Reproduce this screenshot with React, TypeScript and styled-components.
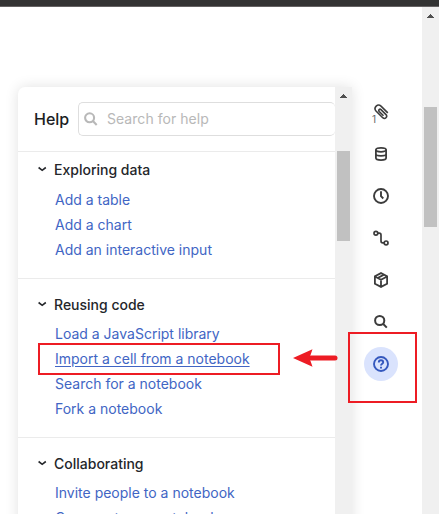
import React from "react";
import styled, { createGlobalStyle, css } from "styled-components";

const GlobalStyle = createGlobalStyle`
  * { box-sizing: border-box; }
  html, body { margin: 0; padding: 0; overflow: hidden; background: #fff; }
  body { font-family: Inter, "Liberation Sans", sans-serif; }
`;

const Window = styled.div`
  position: relative;
  width: 439px;
  height: 514px;
  display: flex;
  flex-direction: column;
  overflow: hidden;
  background: #fff;
`;

const TopBar = styled.div`
  flex: none;
  height: 7px;
  background: #333;
  border-bottom: 1px solid #656263;
`;

const Main = styled.div`
  flex: 1;
  min-height: 0;
  display: flex;
`;

const PanelArea = styled.div`
  flex: none;
  width: 352px;
  padding: 80px 0 0 18px;
`;

const Panel = styled.section`
  display: flex;
  height: 450px;
  border-radius: 7px 0 0 0;
  background: #fff;
  box-shadow: 0 0 14px rgba(0, 0, 0, 0.12);
`;

const PanelContent = styled.div`
  width: 317px;
  overflow: hidden;
`;

const Header = styled.header`
  display: flex;
  align-items: center;
  height: 65px;
  padding-left: 16px;
  border-bottom: 1px solid #ebebeb;
`;

const Title = styled.h1`
  flex: none;
  width: 44px;
  margin: 0;
  font-size: 16px;
  line-height: 24px;
  font-weight: 550;
  color: #1b1e23;
`;

const SearchField = styled.div`
  flex: 1;
  display: flex;
  align-items: center;
  gap: 9px;
  height: 34px;
  padding: 0 0 1px 5px;
  border: 1px solid #dedede;
  border-right: 0;
  border-radius: 5px;
  font-size: 14px;
  letter-spacing: 0.04px;
  color: #b8b8b8;
`;

const Section = styled.section<{ $first?: boolean }>`
  padding: ${(p) => (p.$first ? 5 : 13)}px 0 16px 19px;
  border-bottom: 1px solid #ebebeb;
`;

const SectionTitle = styled.h2<{ $first?: boolean }>`
  display: flex;
  align-items: center;
  gap: 7px;
  height: 24px;
  margin: 0 0 ${(p) => (p.$first ? 6 : 5)}px;
  font-size: 14px;
  font-weight: 550;
  color: #24262a;
`;

const HelpLink = styled.a<{ $active?: boolean }>`
  display: block;
  height: 25px;
  padding-left: 18px;
  font-size: 14px;
  line-height: 25px;
  color: #4165c4;
  text-decoration: ${(p) => (p.$active ? "underline" : "none")};
  text-underline-offset: 2px;
`;

const ScrollTrack = styled.div`
  flex: none;
  width: 17px;
  display: flex;
  flex-direction: column;
  align-items: center;
  background: #f0f0f0;
`;

const ScrollArrow = styled.svg`
  flex: none;
  width: 7px;
  height: 4px;
  margin-top: 7px;
  fill: #505050;
`;

const ScrollThumb = styled.div<{ $offset: number; $length: number }>`
  width: 13px;
  height: ${(p) => p.$length}px;
  margin-top: ${(p) => p.$offset}px;
  background: #c1c1c1;
`;

const Rail = styled.nav`
  flex: 1;
  display: flex;
  flex-direction: column;
  align-items: center;
  padding: 84px 12px 0 0;
`;

const RailItem = styled.div<{ $active?: boolean }>`
  position: relative;
  flex: none;
  display: flex;
  align-items: center;
  justify-content: center;
  width: 34px;
  height: 42px;
  color: #3c3c3c;
  ${(p) =>
    p.$active &&
    css`
      height: 34px;
      margin-top: 4px;
      border-radius: 50%;
      background: #dae3fd;
      color: #3558be;
    `}
`;

const Count = styled.span`
  position: absolute;
  left: 8px;
  top: 22px;
  font-size: 10px;
  line-height: 12px;
  color: #666;
`;

const Highlight = styled.div<{ $x: number; $y: number; $w: number; $h: number }>`
  position: absolute;
  left: ${(p) => p.$x}px;
  top: ${(p) => p.$y}px;
  width: ${(p) => p.$w}px;
  height: ${(p) => p.$h}px;
  border: 2px solid #ed1c24;
`;

const Pointer = styled.svg`
  position: absolute;
  left: 293px;
  top: 348px;
`;

const Icon = ({ children, width = 1.9 }: { children: React.ReactNode; width?: number }) => (
  <svg width="16" height="16" viewBox="0 0 16 16" fill="none" stroke="currentColor" strokeWidth={width}>
    {children}
  </svg>
);

const Chevron = () => (
  <svg width="10" height="8" viewBox="0 0 10 8" fill="none" stroke="currentColor" strokeWidth="1.6">
    <path d="M1.6 2.5 5.2 5.3 8.8 2.5" />
  </svg>
);

const sections = [
  { title: "Exploring data", links: ["Add a table", "Add a chart", "Add an interactive input"] },
  {
    title: "Reusing code",
    links: ["Load a JavaScript library", "Import a cell from a notebook", "Search for a notebook", "Fork a notebook"],
  },
  { title: "Collaborating", links: ["Invite people to a notebook", "Comment on a notebook"] },
];

const activeLink = "Import a cell from a notebook";

const Scrollbar = ({ offset, length }: { offset: number; length: number }) => (
  <ScrollTrack>
    <ScrollArrow viewBox="0 0 7 4" shapeRendering="crispEdges">
      <path d="M3 0h1v1h1v1h1v1h1v1H0V3h1V2h1V1h1z" />
    </ScrollArrow>
    <ScrollThumb $offset={offset} $length={length} />
  </ScrollTrack>
);

export default function App() {
  return (
    <>
      <GlobalStyle />
      <Window>
        <TopBar />
        <Main>
          <PanelArea>
            <Panel>
              <PanelContent>
                <Header>
                  <Title>Help</Title>
                  <SearchField>
                    <svg width="14" height="14" viewBox="0 0 14 14" fill="none" stroke="currentColor" strokeWidth="2.1">
                      <circle cx="5.6" cy="5.8" r="4.5" />
                      <path d="m8.9 9.1 3.8 3.8" />
                    </svg>
                    Search for help
                  </SearchField>
                </Header>
                {sections.map((section, i) => (
                  <Section key={section.title} $first={i === 0}>
                    <SectionTitle $first={i === 0}>
                      <Chevron />
                      {section.title}
                    </SectionTitle>
                    {section.links.map((link) => (
                      <HelpLink key={link} $active={link === activeLink}>
                        {link}
                      </HelpLink>
                    ))}
                  </Section>
                ))}
              </PanelContent>
              <Scrollbar offset={53} length={90} />
            </Panel>
          </PanelArea>
          <Rail>
            <RailItem>
              <Icon width={1.6}>
                <path d="M14.800 8.900 8 2.100C4.700-.8 .1 3.600 3 7l6.700 6.700c2.400 2 5.200-.8 3.300-3.100L8 5.600C6.700 4.500 5 6.100 6.200 7.500l4.300 4.300" />
              </Icon>
              <Count>1</Count>
            </RailItem>
            <RailItem>
              <Icon width={1.8}>
                <ellipse cx="8" cy="3.800" rx="5.100" ry="2" />
                <path d="M2.900 3.800v8.300c0 2.700 10.200 2.700 10.200 0V3.800M2.900 8c0 2.400 10.200 2.400 10.200 0" />
              </Icon>
            </RailItem>
            <RailItem>
              <Icon width={1.9}>
                <circle cx="8" cy="8" r="7" />
                <path d="M8 3.200v5l2.300 2.300" />
              </Icon>
            </RailItem>
            <RailItem>
              <Icon width={1.7}>
                <circle cx="2.900" cy="3.200" r="1.900" />
                <circle cx="13.100" cy="12.900" r="1.900" />
                <path d="M4.800 3.200h1.500Q8 3.200 8 5v6.100q0 1.800 1.700 1.800h1.500" />
              </Icon>
            </RailItem>
            <RailItem>
              <Icon width={1.8}>
                <path d="M8 1.100 14.100 4.300v7.400L8 14.900 1.900 11.700V4.300zM1.900 4.500 8 7.800l6.100-3.300M8 7.800v7M4.700 6 11 2.600" />
              </Icon>
            </RailItem>
            <RailItem>
              <Icon width={2}>
                <circle cx="6.700" cy="6.500" r="4.600" />
                <path d="m10 9.800 3.800 3.800" />
              </Icon>
            </RailItem>
            <RailItem $active>
              <Icon width={1.9}>
                <circle cx="8" cy="8" r="7" />
                <path d="M5.800 6.500c0-3 4.400-2.800 4.400-.2C10.200 7.800 8 7.700 8 9.600M8 10.800v1.800" />
              </Icon>
            </RailItem>
          </Rail>
          <Scrollbar offset={89} length={120} />
        </Main>
        <Highlight $x={38} $y={343} $w={242} $h={32} />
        <Highlight $x={348} $y={332} $w={69} $h={71} />
        <Pointer width="45" height="20" viewBox="0 0 45 20">
          <path d="M18 10h24" stroke="#ed1c24" strokeWidth="5" strokeLinecap="round" />
          <path d="M0 10 19.500 1.300 16.500 10l3 8.700z" fill="#ed1c24" />
        </Pointer>
      </Window>
    </>
  );
}
